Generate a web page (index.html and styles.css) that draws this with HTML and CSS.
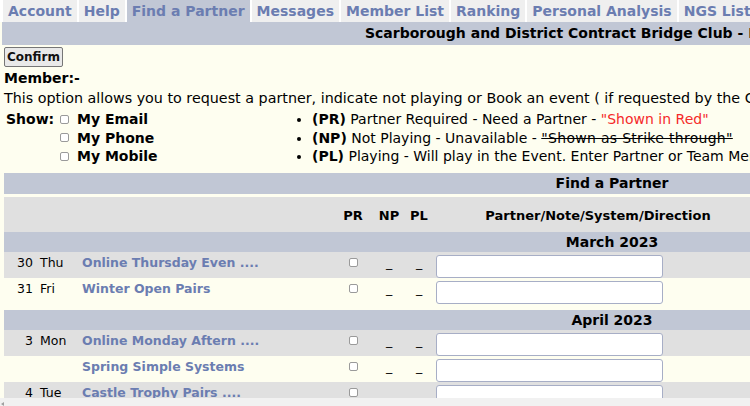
FILE: index.html
```html
<!DOCTYPE html>
<html lang="en">
<head>
<meta charset="utf-8">
<title>Find a Partner</title>
<link rel="stylesheet" href="styles.css">
</head>
<body>
<div class="page">
  <nav class="tabs">
    <a class="tab">Account</a>
    <a class="tab">Help</a>
    <a class="tab active">Find a Partner</a>
    <a class="tab">Messages</a>
    <a class="tab">Member List</a>
    <a class="tab">Ranking</a>
    <a class="tab">Personal Analysis</a>
    <a class="tab">NGS List</a>
    <a class="tab">Results</a>
  </nav>
  <div class="titlebar">Scarborough and District Contract Bridge Club - Find a Partner</div>
  <div class="content">
    <button class="confirm" type="button">Confirm</button>
    <div class="member">Member:-</div>
    <p class="intro">This option allows you to request a partner, indicate not playing or Book an event ( if requested by the Club ). Changes are saved when you press Confirm.</p>
    <div class="legend">
      <div class="show">
        <span class="show-label">Show:</span>
        <div class="show-opts">
          <label class="opt"><input type="checkbox" class="cb"> My Email</label>
          <label class="opt"><input type="checkbox" class="cb"> My Phone</label>
          <label class="opt"><input type="checkbox" class="cb"> My Mobile</label>
        </div>
      </div>
      <ul class="key">
        <li><b>(PR)</b> Partner Required - Need a Partner - <span class="red">"Shown in Red"</span></li>
        <li><b>(NP)</b> Not Playing - Unavailable - <s class="strike">"Shown as Strike through"</s></li>
        <li><b>(PL)</b> Playing - Will play in the Event. Enter Partner or Team Members</li>
      </ul>
    </div>

    <div class="fap-title">Find a Partner</div>
    <table class="fap">
      <colgroup>
        <col class="c-num"><col class="c-day"><col class="c-event"><col class="c-pr"><col class="c-np"><col class="c-pl"><col class="c-partner"><col class="c-rest">
      </colgroup>
      <thead>
        <tr class="head">
          <th></th><th></th><th></th><th>PR</th><th>NP</th><th>PL</th><th>Partner/Note/System/Direction</th><th></th>
        </tr>
      </thead>
      <tbody>
        <tr class="month"><th colspan="8">March 2023</th></tr>
        <tr class="ev grey">
          <td class="num">30</td><td class="day">Thu</td><td class="event"><a>Online Thursday Even ....</a></td>
          <td class="chk"><input type="checkbox" class="cb"></td><td class="dash">_</td><td class="dash">_</td>
          <td class="partner"><input type="text" class="txt"></td><td></td>
        </tr>
        <tr class="ev cream last">
          <td class="num">31</td><td class="day">Fri</td><td class="event"><a>Winter Open Pairs</a></td>
          <td class="chk"><input type="checkbox" class="cb"></td><td class="dash">_</td><td class="dash">_</td>
          <td class="partner"><input type="text" class="txt"></td><td></td>
        </tr>
        <tr class="month"><th colspan="8">April 2023</th></tr>
        <tr class="ev grey">
          <td class="num">3</td><td class="day">Mon</td><td class="event"><a>Online Monday Aftern ....</a></td>
          <td class="chk"><input type="checkbox" class="cb"></td><td class="dash">_</td><td class="dash">_</td>
          <td class="partner"><input type="text" class="txt"></td><td></td>
        </tr>
        <tr class="ev cream">
          <td class="num"></td><td class="day"></td><td class="event"><a>Spring Simple Systems</a></td>
          <td class="chk"><input type="checkbox" class="cb"></td><td class="dash">_</td><td class="dash">_</td>
          <td class="partner"><input type="text" class="txt"></td><td></td>
        </tr>
        <tr class="ev grey">
          <td class="num">4</td><td class="day">Tue</td><td class="event"><a>Castle Trophy Pairs ....</a></td>
          <td class="chk"><input type="checkbox" class="cb"></td><td class="dash">_</td><td class="dash">_</td>
          <td class="partner"><input type="text" class="txt"></td><td></td>
        </tr>
      </tbody>
    </table>
  </div>
</div>
<div class="hscroll"><svg class="hs-arrow" width="4" height="4" viewBox="0 0 4 4"><path d="M3 0 L0 2 L3 4 Z" fill="#a0a0a0"/></svg></div>
</body>
</html>
```
FILE: styles.css
```css
html {
  overflow: hidden;
}
body {
  margin: 0;
  background: #fefef0;
  font-family: "DejaVu Sans", Verdana, sans-serif;
  font-size: 14px;
  color: #000;
}
.page {
  width: 1224px;
}
.tabs {
  display: flex;
  gap: 2px;
  background: #fff;
  padding-left: 3px;
  height: 22px;
}
.tab {
  display: block;
  background: #efefef;
  color: #6b7db1;
  font-weight: bold;
  font-size: 14px;
  line-height: 22px;
  padding: 0 5px;
  white-space: nowrap;
}
.tab.active {
  background: #c1c7d5;
}
.titlebar {
  background: #c1c7d5;
  height: 23px;
  line-height: 23px;
  font-weight: bold;
  font-size: 14px;
  text-align: center;
  margin-left: 2px;
  white-space: nowrap;
}
.content {
  padding: 2px 0 0 4px;
}
.confirm {
  display: block;
  font-family: "DejaVu Sans", Verdana, sans-serif;
  font-weight: bold;
  font-size: 12px;
  height: 20px;
  padding: 0 2px;
  background: #e9e9e9;
  color: #111;
  border: 1px solid #767676;
  border-radius: 2px;
}
.member {
  font-weight: bold;
  font-size: 14px;
  line-height: 19px;
  margin-top: 2px;
}
.intro {
  margin: 1px 0 0;
  line-height: 19px;
  white-space: nowrap;
  font-size: 14.3px;
}
.legend {
  display: flex;
  margin-top: 2px;
  padding-bottom: 7px;
}
.show {
  display: flex;
  width: 276px;
  padding-left: 2px;
  font-weight: bold;
  line-height: 18.5px;
}
.show-label {
  width: 54px;
}
.show-opts {
  display: flex;
  flex-direction: column;
}
.opt {
  display: flex;
  align-items: center;
  gap: 8px;
}
.cb {
  appearance: none;
  -webkit-appearance: none;
  width: 9px;
  height: 9px;
  margin: 0;
  border: 1px solid #9a9a9a;
  border-radius: 2px;
  background: #fff;
  display: block;
}
.key {
  margin: 0;
  padding-left: 30px;
  line-height: 18.5px;
  white-space: nowrap;
}
.red {
  color: #f52a2a;
}
.strike {
  letter-spacing: 0.3px;
}
.fap-title {
  width: 1216px;
  background: #c1c7d5;
  height: 21px;
  line-height: 21px;
  font-weight: bold;
  text-align: center;
  margin-bottom: 3px;
}
.fap {
  width: 1216px;
  table-layout: fixed;
  border-collapse: collapse;
  font-size: 12.5px;
}
.c-num { width: 32px; }
.c-day { width: 42px; }
.c-event { width: 258px; }
.c-pr { width: 34px; }
.c-np { width: 38px; }
.c-pl { width: 22px; }
.c-partner { width: 336px; }
.head {
  background: #e0e0e0;
  height: 35px;
}
.head th {
  padding: 2px 0 0;
  font-size: 13px;
  vertical-align: middle;
}
.month th {
  background: #c1c7d5;
  height: 20px;
  padding: 0;
  font-size: 14px;
  line-height: 20px;
}
.ev.grey { background: #e0e0e0; }
.ev.cream { background: #fefef0; }
.ev td {
  padding: 3px 0 0;
  vertical-align: top;
  line-height: 16px;
  white-space: nowrap;
  overflow: hidden;
}
.ev.last td {
  padding-bottom: 6px;
}
.num {
  text-align: right;
  padding-right: 3px !important;
}
.day {
  padding-left: 4px !important;
}
.event {
  padding-left: 4px !important;
}
.event a {
  color: #6b7db1;
  font-weight: bold;
}
.chk .cb {
  margin: 3px auto 0;
}
.dash {
  text-align: center;
}
.partner {
  padding-left: 6px !important;
}
.txt {
  display: block;
  box-sizing: border-box;
  width: 227px;
  height: 23px;
  margin: 0;
  border: 1px solid #a7aec6;
  border-radius: 3px;
  background: #fff;
}
.hscroll {
  position: fixed;
  left: 0;
  right: 0;
  bottom: 0;
  height: 8px;
  background: #f1f1f1;
}
.hs-arrow {
  position: absolute;
  left: 1px;
  top: 4px;
}
```
